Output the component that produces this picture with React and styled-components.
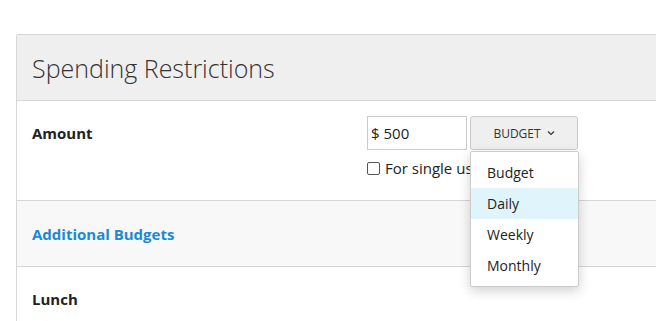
import React from 'react';
import styled, { createGlobalStyle } from 'styled-components';

const GlobalStyle = createGlobalStyle`
  body {
    margin: 0;
    background: #fff;
    font-family: 'Open Sans', 'Liberation Sans', sans-serif;
    color: #222;
    overflow: hidden;
  }
`;

const Page = styled.div`
  padding: 34px 0 0 16px;
  width: 720px;
`;

const Panel = styled.div`
  border: 1px solid #d6d6d6;
  border-right: none;
  border-radius: 3px 0 0 0;
`;

const PanelHeader = styled.div`
  height: 65px;
  background: #efefef;
  border-bottom: 1px solid #d6d6d6;
  display: flex;
  align-items: center;
  padding-left: 15px;
`;

const Title = styled.h2`
  margin: 0;
  font-size: 25px;
  font-weight: 300;
  color: #333;
`;

const Row = styled.div`
  display: grid;
  grid-template-columns: 335px 1fr;
  padding: 15px 15px 0;
  height: 100px;
  box-sizing: border-box;
  border-bottom: 1px solid #d6d6d6;
`;

const Label = styled.div`
  font-size: 15px;
  font-weight: 700;
  line-height: 34px;
  color: #222;
`;

const Controls = styled.div`
  display: flex;
  flex-direction: column;
`;

const InputLine = styled.div`
  display: flex;
  gap: 3px;
`;

const AmountInput = styled.div`
  width: 100px;
  height: 34px;
  box-sizing: border-box;
  border: 1px solid #ccc;
  font-size: 15px;
  line-height: 32px;
  padding-left: 3px;
  color: #222;
`;

const DropWrap = styled.div`
  position: relative;
`;

const DropButton = styled.div`
  width: 108px;
  height: 34px;
  box-sizing: border-box;
  background: #efefef;
  border: 1px solid #ccc;
  border-radius: 3px;
  display: flex;
  align-items: center;
  justify-content: center;
  gap: 6px;
  font-size: 12px;
  color: #333;
  text-transform: uppercase;
`;

const Menu = styled.ul`
  position: absolute;
  top: 35px;
  left: 0;
  width: 109px;
  margin: 0;
  padding: 5px 0;
  list-style: none;
  background: #fff;
  border: 1px solid #ccc;
  border-radius: 2px;
  box-shadow: 0 4px 12px rgba(0, 0, 0, 0.18);
  box-sizing: border-box;
  z-index: 5;
`;

const MenuItem = styled.li`
  height: 31px;
  line-height: 31px;
  padding-left: 16px;
  font-size: 14px;
  color: #222;
  background: ${(p) => (p.active ? '#dff4fb' : 'transparent')};
`;

const CheckLine = styled.label`
  display: flex;
  align-items: center;
  gap: 5px;
  margin-top: 8px;
  font-size: 15px;
  color: #222;
  white-space: nowrap;
`;

const Box = styled.span`
  width: 11px;
  height: 11px;
  border: 1px solid #555;
  border-radius: 2px;
`;

const Section = styled.div`
  height: 65px;
  background: #f8f8f8;
  border-bottom: 1px solid #d6d6d6;
  display: flex;
  align-items: center;
  padding-left: 15px;
  font-size: 15px;
  font-weight: 700;
  color: #1a8ad4;
`;

const SubRow = styled.div`
  padding: 22px 15px 0;
  height: 60px;
`;

const SubLabel = styled.div`
  font-size: 15px;
  font-weight: 700;
  color: #222;
`;

const Chevron = () => (
  <svg width="8" height="6" viewBox="0 0 8 6" fill="none">
    <path d="M1 1.5l3 3 3-3" stroke="#333" strokeWidth="1.2" />
  </svg>
);

const options = ['Budget', 'Daily', 'Weekly', 'Monthly'];

export default function App() {
  return (
    <>
      <GlobalStyle />
      <Page>
        <Panel>
          <PanelHeader>
            <Title>Spending Restrictions</Title>
          </PanelHeader>
          <Row>
            <Label>Amount</Label>
            <Controls>
              <InputLine>
                <AmountInput>$ 500</AmountInput>
                <DropWrap>
                  <DropButton>
                    Budget <Chevron />
                  </DropButton>
                  <Menu>
                    {options.map((o) => (
                      <MenuItem key={o} active={o === 'Daily'}>
                        {o}
                      </MenuItem>
                    ))}
                  </Menu>
                </DropWrap>
              </InputLine>
              <CheckLine>
                <Box />
                For single use
              </CheckLine>
            </Controls>
          </Row>
          <Section>Additional Budgets</Section>
          <SubRow>
            <SubLabel>Lunch</SubLabel>
          </SubRow>
        </Panel>
      </Page>
    </>
  );
}
